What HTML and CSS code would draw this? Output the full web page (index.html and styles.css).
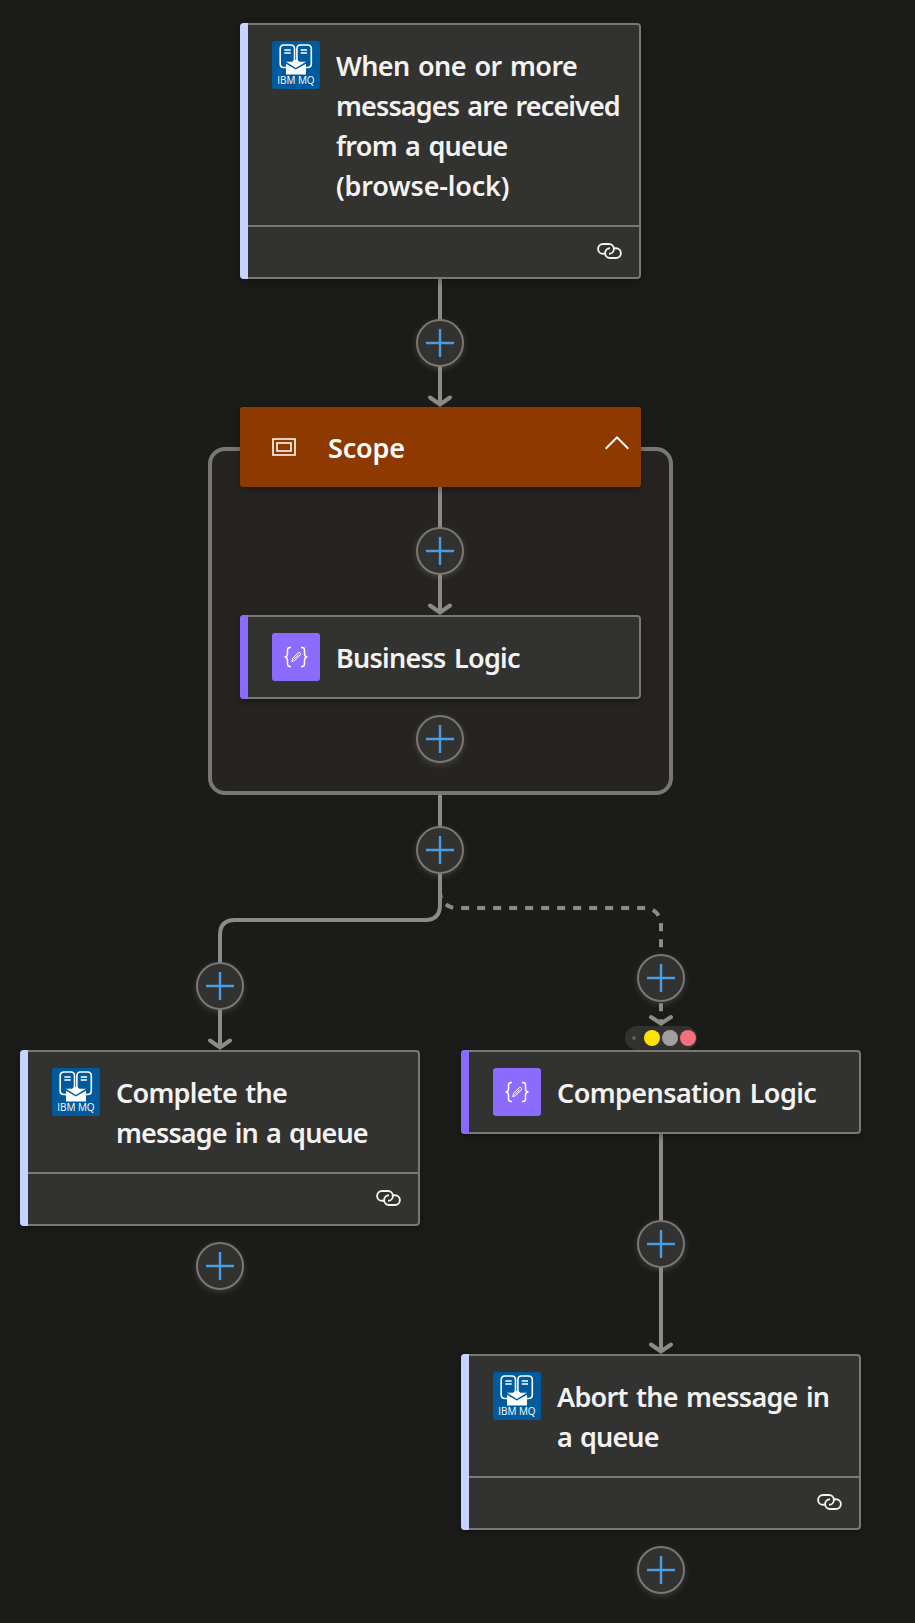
FILE: index.html
```html
<!DOCTYPE html>
<html lang="en">
<head>
<meta charset="utf-8">
<title>Workflow designer</title>
<link rel="stylesheet" href="styles.css">
</head>
<body>
<svg class="defs" width="0" height="0" aria-hidden="true">
  <symbol id="plus" viewBox="0 0 28 28"><path d="M14 0V28M0 14H28" fill="none" stroke="#479ee6" stroke-width="2.4"/></symbol>
  <symbol id="link" viewBox="0 0 25 16"><path d="M7.5 10.8H6A4.9 4.9 0 0 1 6 1H12A4.9 4.9 0 0 1 12 10.8M17.5 5.2H19A4.9 4.9 0 0 1 19 15H13A4.9 4.9 0 0 1 13 5.2" fill="none" stroke="#f3f2f1" stroke-width="1.9"/></symbol>
  <symbol id="mq" viewBox="0 0 48 48">
    <rect width="48" height="48" rx="3" fill="#005a9e"/>
    <path d="M14 26.5H12Q8.2 26.5 8.2 22.7V7.8Q8.2 4 12 4H18.7Q22.5 4 22.5 7.8V21M34 26.5H35.5Q39.3 26.5 39.3 22.7V7.8Q39.3 4 35.5 4H28.6Q24.9 4 24.9 7.8V21M12.3 9H18.7M12.3 12H18.7M28.7 9H35M28.7 12H35" fill="none" stroke="#fff" stroke-width="1.6"/>
    <path d="M14 20.8L20 20.8L22 19H25.5L27.5 20.8H34L23.8 27ZM14 22.8L23.8 28.6L34 22.8V33.5H14Z" fill="#fff"/>
  </symbol>
  <symbol id="code" viewBox="0 0 48 48">
    <rect width="48" height="48" rx="3" fill="#8c6cff"/>
    <path d="M19 14.5H18Q15.5 14.5 15.5 17V20.5Q15.5 24 12.5 24Q15.5 24 15.5 27.5V31Q15.5 33.5 18 33.5H19M29 14.5H30Q32.5 14.5 32.5 17V20.5Q32.5 24 35.5 24Q32.5 24 32.5 27.5V31Q32.5 33.5 30 33.5H29" fill="none" stroke="#fff" stroke-width="1.5"/>
    <path d="M19.8 28.7L20.7 25.2L26.3 19.6Q27.2 18.9 28.2 19.8Q29.1 20.8 28.3 21.8L22.8 27.5ZM22 26.3L26.7 21.5" fill="none" stroke="#fff" stroke-width="1"/>
  </symbol>
</svg>

<main class="canvas">
  <section class="scope-box"></section>

  <div class="run-after"><i class="dot small"></i><i class="dot yellow"></i><i class="dot gray"></i><i class="dot pink"></i></div>

  <svg class="edges" width="915" height="1623" viewBox="0 0 915 1623">
    <path d="M440 279V403M440 487V611M440 795V905Q440 920 425 920H235Q220 920 220 935V1046M661 1134V1350"/>
    <path d="M440 892A16 16 0 0 0 456 908H645A16 16 0 0 1 661 924V1024" stroke-dasharray="8 8" stroke-dashoffset="1.9"/>
    <path class="heads" d="M430 397.5L440 404.5L450 397.5M430 605.5L440 612.5L450 605.5M210 1040.5L220 1047.5L230 1040.5M651 1017L661 1023.5L671 1017M651 1344.5L661 1351.5L671 1344.5"/>
  </svg>

  <article class="card trigger">
    <header><svg class="icon" viewBox="0 0 48 48"><use href="#mq"/><text x="5.2" y="43" class="mq-text" textLength="37.4" lengthAdjust="spacingAndGlyphs">IBM MQ</text></svg><h2><span class="t60">When one or more</span><span class="t88">messages are received</span><span class="t73">from a queue</span><span class="t15">(browse-lock)</span></h2></header>
    <footer><svg class="link"><use href="#link"/></svg></footer>
  </article>

  <article class="scope">
    <svg class="scope-icon" viewBox="0 0 24 18"><path d="M1 1H23V17H1ZM5 5H19V13H5Z"/></svg>
    <h2><span class="t15">Scope</span></h2>
    <svg class="chevron" viewBox="0 0 24 14"><path d="M.7 12.7L12 1.4L23.3 12.7"/></svg>
  </article>

  <article class="card code business">
    <header><svg class="icon"><use href="#code"/></svg><h2><span class="t73">Business Logic</span></h2></header>
  </article>

  <article class="card complete">
    <header><svg class="icon" viewBox="0 0 48 48"><use href="#mq"/><text x="5.2" y="43" class="mq-text" textLength="37.4" lengthAdjust="spacingAndGlyphs">IBM MQ</text></svg><h2><span class="t73">Complete the</span><span class="t88">message in a queue</span></h2></header>
    <footer><svg class="link"><use href="#link"/></svg></footer>
  </article>

  <article class="card code compensation">
    <header><svg class="icon"><use href="#code"/></svg><h2><span class="t60">Compensation Logic</span></h2></header>
  </article>

  <article class="card abort">
    <header><svg class="icon" viewBox="0 0 48 48"><use href="#mq"/><text x="5.2" y="43" class="mq-text" textLength="37.4" lengthAdjust="spacingAndGlyphs">IBM MQ</text></svg><h2><span class="t73">Abort the message in</span><span class="t88">a queue</span></h2></header>
    <footer><svg class="link"><use href="#link"/></svg></footer>
  </article>

  <button class="add a1"><svg><use href="#plus"/></svg></button>
  <button class="add a2"><svg><use href="#plus"/></svg></button>
  <button class="add a3"><svg><use href="#plus"/></svg></button>
  <button class="add a4"><svg><use href="#plus"/></svg></button>
  <button class="add a5"><svg><use href="#plus"/></svg></button>
  <button class="add a6"><svg><use href="#plus"/></svg></button>
  <button class="add a7"><svg><use href="#plus"/></svg></button>
  <button class="add a8"><svg><use href="#plus"/></svg></button>
  <button class="add a9"><svg><use href="#plus"/></svg></button>
</main>
</body>
</html>
```
FILE: styles.css
```css
* { box-sizing: border-box; }
body { margin: 0; background: #1b1b19; font-family: "Noto Sans", "Open Sans", sans-serif; }
.defs { position: absolute; }
.canvas { position: relative; width: 915px; height: 1623px; overflow: hidden; }

h2 { margin: 0; font-size: 27px; font-weight: 600; line-height: 40px; word-spacing: 2px; color: #f3f2f1; white-space: nowrap; }
h2 span { display: block; }
.t15 { letter-spacing: -0.17px; }
.t60 { letter-spacing: -0.59px; }
.t73 { letter-spacing: -0.74px; }
.t88 { letter-spacing: -0.88px; }
.mq-text { font-family: "Open Sans", sans-serif; font-size: 11px; fill: #fff; }

/* Connectors */
.edges { position: absolute; left: 0; top: 0; fill: none; stroke: #8d8b89; stroke-width: 4; }
.heads { stroke-linecap: round; stroke-linejoin: miter; }

/* Operation cards */
.card { position: absolute; width: 400px; padding-left: 6px; border: 2px solid #797876; border-radius: 4px; background: #323231; box-shadow: 0 3px 7px rgba(0, 0, 0, .3); }
.card::before { content: ""; position: absolute; left: -2px; top: -2px; bottom: -2px; width: 8px; border-radius: 4px 0 0 4px; background: #c6d2ff; }
.card.code::before { background: #8c6cff; }
.card header { display: flex; gap: 16px; padding: 21px 0 19px 24px; }
.card .icon { flex: none; width: 48px; height: 48px; margin: -5px 0 -3px; }
.card footer { display: flex; justify-content: flex-end; height: 52px; padding: 16px 17px; border-top: 2px solid #797876; }
.link { width: 25px; height: 16px; }

.trigger { left: 240px; top: 23px; width: 401px; }
.business { left: 240px; top: 615px; width: 401px; }
.complete { left: 20px; top: 1050px; }
.compensation { left: 461px; top: 1050px; }
.abort { left: 461px; top: 1354px; }

/* Scope container */
.scope-box { position: absolute; left: 208px; top: 447px; width: 465px; height: 348px; border: 4px solid #797775; border-radius: 17px; background: #252422; }
.scope { position: absolute; left: 240px; top: 407px; width: 401px; height: 80px; display: flex; align-items: center; padding: 0 12px 0 32px; border-radius: 3px; background: #8d3900; box-shadow: 0 3px 7px rgba(0, 0, 0, .3); }
.scope h2 { flex: 1; margin: 2px 0 0 32px; color: #fff; }
.scope svg { fill: none; stroke: #fff; }
.scope-icon { width: 24px; height: 18px; stroke-width: 1.6; }
.chevron { width: 24px; height: 14px; margin-top: -9px; stroke-width: 2; }

/* Run-after status pill */
.run-after { position: absolute; left: 625px; top: 1026px; width: 72px; height: 24px; display: flex; align-items: center; gap: 2px; padding-left: 7px; border-radius: 12px; background: #323231; }
.dot { width: 16px; height: 16px; border-radius: 50%; }
.dot.small { width: 4px; height: 4px; margin-right: 6px; background: #605e5c; }
.yellow { background: #fde300; }
.gray { background: #a19f9d; }
.pink { background: #f1707b; }

/* Insert buttons */
.add { position: absolute; width: 48px; height: 48px; display: flex; align-items: center; justify-content: center; padding: 0; border: 2px solid #797775; border-radius: 50%; background: #323231; box-shadow: 0 2px 6px rgba(140, 140, 140, .3); }
.add svg { width: 28px; height: 28px; }
.a1, .a2, .a3, .a4 { left: 416px; }
.a5, .a6 { left: 196px; }
.a7, .a8, .a9 { left: 637px; }
.a1 { top: 319px; }
.a2 { top: 527px; }
.a3 { top: 715px; }
.a4 { top: 826px; }
.a5 { top: 962px; }
.a6 { top: 1242px; }
.a7 { top: 954px; }
.a8 { top: 1220px; }
.a9 { top: 1546px; }
```
